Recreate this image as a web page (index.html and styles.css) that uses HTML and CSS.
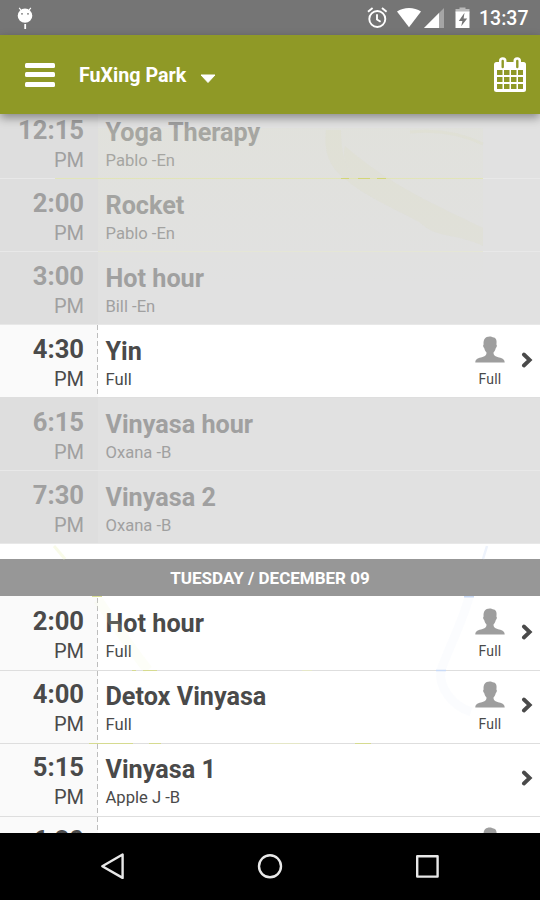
FILE: index.html
```html
<!DOCTYPE html>
<html lang="en">
<head>
    <meta charset="UTF-8">
    <meta name="viewport" content="width=device-width, initial-scale=1.0">
    <title>Class Schedule</title>
    <link rel="stylesheet" href="styles.css">
</head>
<body>
    <!-- Shared icons -->
    <svg class="sprite">
        <symbol id="person" viewBox="0 0 30 27">
            <path d="M0.3 26.5c0-3.600 3-4.500 7.200-5.600 3-.8 4.200-2 4-4.400-1.200-1.300-1.900-2.700-2.300-4.600-1-.8-1.500-2.900-.6-3.500C8.200 3.500 10 .4 14.800.4c1.400 0 2.200.3 2.900.9 3.200.2 4.500 3 3.700 7.100.9.600.4 2.700-.6 3.500-.4 1.900-1.100 3.300-2.300 4.600-.2 2.400 1 3.600 4 4.400 4.200 1.100 7.200 2 7.200 5.600z"/>
        </symbol>
        <symbol id="chevron" viewBox="0 0 12 16">
            <path d="M2.900 2.500 8.700 8l-5.800 5.500" fill="none" stroke="#4a4a4a" stroke-width="3.800" stroke-linecap="round"/>
        </symbol>
    </svg>

    <div class="status-bar">
        <svg class="droid" width="16" height="22" viewBox="0 0 16 22" fill="#fff">
            <path d="M2.200.8 4.500 4M13.800.8 11.500 4" stroke="#fff" stroke-width="1.200"/>
            <ellipse cx="8" cy="8.700" rx="7.300" ry="7.100"/>
            <path d="M7.300 17h1.800v5H7.300z"/>
            <circle cx="5" cy="6.800" r=".9" fill="#757575"/>
            <circle cx="11" cy="6.800" r=".9" fill="#757575"/>
        </svg>
        <svg class="status-icons" width="104" height="22" viewBox="0 0 104 22" fill="#fff">
            <!-- alarm -->
            <g fill="none" stroke="#fff" stroke-width="1.900">
                <circle cx="10.300" cy="12" r="8"/>
                <path d="M10 7.300v5.200l3.600 2.300M1 4.700l4.600-3.800M19.600 4.700 15 .9"/>
            </g>
            <!-- wifi -->
            <path d="M30 4.500C36.500-.3 47.500-.3 54 4.500L42 20.300z"/>
            <!-- signal -->
            <path d="M77 1v20H57z" opacity=".35"/>
            <path d="M72 6v15H57z"/>
            <!-- battery -->
            <path d="M92.500.5h6V2h4v3.500h-14V2h4z" opacity=".5"/>
            <path d="M88.500 4.500h14V21h-14z"/>
            <path d="M97.500 5.800 91.800 14h3.600l-1.200 5.200 6-7.800h-3.600z" fill="#757575"/>
        </svg>
        <span class="clock">13:37</span>
    </div>

    <header class="app-bar">
        <div class="menu"><span></span><span></span><span></span></div>
        <h1>FuXing Park</h1>
        <svg class="caret" width="16" height="10" viewBox="0 0 16 10"><path d="M1 1h14L8 8.500z" fill="#fff" stroke="#fff" stroke-linejoin="round"/></svg>
        <svg class="calendar" width="32" height="35" viewBox="0 0 32 35">
            <rect y="5" width="32" height="30" rx="2.500" fill="#fff"/>
            <rect x="5" y=".3" width="7.500" height="13" rx="3.700" fill="#fff"/>
            <rect x="19.500" y=".3" width="7.500" height="13" rx="3.700" fill="#fff"/>
            <path d="M8.700 4v6M23.300 4v6" stroke="#8f9926" stroke-width="2.400" stroke-linecap="round"/>
            <path fill="#8f9926" d="M3 13h5.500v5H3zm7 0h5.500v5H10zm7 0h5.500v5H17zm7 0h5v5h-5zM3 20h5.500v5H3zm7 0h5.500v5H10zm7 0h5.500v5H17zm7 0h5v5h-5zM3 27h5.500v5H3zm7 0h5.500v5H10zm7 0h5.500v5H17zm7 0h5v5h-5z"/>
        </svg>
    </header>

    <main class="schedule">
        <section class="day today">
            <article class="row past">
                <div class="time"><b>12:15</b><span>PM</span></div>
                <div class="info"><h2>Yoga Therapy</h2><p>Pablo -En</p></div>
            </article>
            <article class="row past">
                <div class="time"><b>2:00</b><span>PM</span></div>
                <div class="info"><h2>Rocket</h2><p>Pablo -En</p></div>
            </article>
            <article class="row past">
                <div class="time"><b>3:00</b><span>PM</span></div>
                <div class="info"><h2>Hot hour</h2><p>Bill -En</p></div>
            </article>
            <article class="row">
                <div class="time"><b>4:30</b><span>PM</span></div>
                <div class="info"><h2>Yin</h2><p>Full</p></div>
                <div class="spots"><svg><use href="#person"/></svg>Full</div>
                <svg class="chevron"><use href="#chevron"/></svg>
            </article>
            <article class="row past">
                <div class="time"><b>6:15</b><span>PM</span></div>
                <div class="info"><h2>Vinyasa hour</h2><p>Oxana -B</p></div>
            </article>
            <article class="row past">
                <div class="time"><b>7:30</b><span>PM</span></div>
                <div class="info"><h2>Vinyasa 2</h2><p>Oxana -B</p></div>
            </article>
        </section>

        <h3 class="date">TUESDAY / DECEMBER 09</h3>

        <section class="day upcoming">
            <article class="row">
                <div class="time"><b>2:00</b><span>PM</span></div>
                <div class="info"><h2>Hot hour</h2><p>Full</p></div>
                <div class="spots"><svg><use href="#person"/></svg>Full</div>
                <svg class="chevron"><use href="#chevron"/></svg>
            </article>
            <article class="row">
                <div class="time"><b>4:00</b><span>PM</span></div>
                <div class="info"><h2>Detox Vinyasa</h2><p>Full</p></div>
                <div class="spots"><svg><use href="#person"/></svg>Full</div>
                <svg class="chevron"><use href="#chevron"/></svg>
            </article>
            <article class="row">
                <div class="time"><b>5:15</b><span>PM</span></div>
                <div class="info"><h2>Vinyasa 1</h2><p>Apple J -B</p></div>
                <svg class="chevron"><use href="#chevron"/></svg>
            </article>
            <article class="row">
                <div class="time"><b>6:30</b></div>
                <div class="info"></div>
                <div class="spots"><svg><use href="#person"/></svg></div>
                <svg class="chevron"><use href="#chevron"/></svg>
            </article>
        </section>

        <!-- Faint map showing through the list -->
        <svg class="map" viewBox="0 114 540 719" fill="none">
            <defs>
                <linearGradient id="park" x1="0" y1="0" x2="0" y2="1">
                    <stop offset="0" stop-color="#dfe3b0" stop-opacity=".1"/>
                    <stop offset="1" stop-color="#dfe3b0" stop-opacity="0"/>
                </linearGradient>
            </defs>
            <path d="M98 128h385v157H98z" fill="url(#park)"/>
            <path d="M326 130q-4 32 18 48c20 18 45 28 75 44 20 18 35 10 64 24v-18c-40-20-90-40-138-82q-4 14 8 30-12-14-12-46z" fill="#d9d39b" opacity=".1"/>
            <path d="M410 132q40-4 73 12" stroke="#d9d39b" stroke-width="3" opacity=".1"/>
            <path d="M55 178.500h428" stroke="#dde29a" opacity=".6"/>
            <path d="M341 178.500h8M358 178.500h12M377 178.500h9" stroke="#d0d267" opacity=".8"/>
            <path d="M98 251.500h385" stroke="#e2e4cb" opacity=".6"/>
            <path d="M54 546l11 13" stroke="#f1f4c8" stroke-width="3" opacity=".4"/>
            <path d="M98 600c14 20 30 45 50 70" stroke="#f1f4c8" stroke-width="10" opacity=".12"/>
            <path d="M92 596.500h10M132 670.500h4M143 670.500h14M89 743.500h44M149 743.500h12M355 743.500h16" stroke="#d3d97c" opacity=".8"/>
            <path d="M302 670.500h10M270 743.500h30" stroke="#e9ecb8" opacity=".6"/>
            <path d="M487 546l-4 13" stroke="#eef3fc" stroke-width="2.500"/>
            <path d="M469 597c-6 24-20 50-28 73-3 18 12 36 30 42" stroke="#dfe8fa" stroke-width="9" opacity=".12"/>
            <path d="M464 596.700h10M436 670.500h10" stroke="#c9daf6" stroke-width="1.400"/>
        </svg>
    </main>

    <nav class="nav-bar">
        <svg width="330" height="28" viewBox="0 0 330 28" fill="none" stroke="#e8e8e8" stroke-width="2.400" stroke-linejoin="round">
            <path d="M17.600 2.500v23.400L-2.700 14.200z"/>
            <circle cx="165" cy="14.300" r="11"/>
            <rect x="312.200" y="4.200" width="20.400" height="20.400"/>
        </svg>
    </nav>
</body>
</html>
```
FILE: styles.css
```css
* {
    box-sizing: border-box;
    margin: 0;
    padding: 0;
}

body {
    width: 540px;
    height: 900px;
    display: flex;
    flex-direction: column;
    overflow: hidden;
    font-family: Roboto, sans-serif;
    color: #4a4a4a;
    background: #fff;
}

svg {
    display: block;
    flex: none;
}

.sprite {
    position: absolute;
    width: 0;
    height: 0;
}

/* Android status bar */
.status-bar {
    height: 35px;
    flex: none;
    display: flex;
    align-items: flex-start;
    padding: 7px 11px 0 17px;
    background: #757575;
    color: #fff;
}

.status-icons {
    margin-left: auto;
}

.clock {
    width: 50px;
    margin-left: 8px;
    font-size: 19.5px;
    font-weight: 500;
    line-height: 24px;
    white-space: nowrap;
}

/* Green header */
.app-bar {
    height: 79px;
    flex: none;
    display: flex;
    align-items: center;
    padding: 0 14px 0 25px;
    background: #8f9926;
    color: #fff;
    box-shadow: 0 4px 9px rgba(0, 0, 0, 0.38);
    position: relative;
    z-index: 2;
}

.menu {
    width: 30px;
    display: grid;
    gap: 4.5px;
    margin-right: 24px;
}

.menu span {
    height: 5px;
    border-radius: 1.5px;
    background: #fff;
}

.app-bar h1 {
    width: 109px;
    padding-top: 2px;
    font-size: 19.7px;
    font-weight: 700;
    line-height: 24px;
    white-space: nowrap;
}

.caret {
    margin: 9px 0 0 12px;
}

.calendar {
    margin-left: auto;
    margin-top: -1px;
}

/* Class list */
.schedule {
    flex: 1;
    min-height: 0;
    overflow: hidden;
    position: relative;
}

.today {
    margin-top: -8px;
}

.row {
    height: 73px;
    display: flex;
    border-bottom: 1px solid #dedede;
    background: #fff;
}

.time {
    width: 98px;
    padding: 9px 14px 0 0;
    text-align: right;
    background: repeating-linear-gradient(#bdbdbd 0 5px, transparent 5px 8px) right / 1px 100% no-repeat #fafafa;
}

.time b {
    display: block;
    font-size: 25.6px;
    line-height: 30px;
}

.time span {
    display: block;
    font-size: 20px;
    line-height: 24px;
    margin-top: 3px;
}

.info {
    flex: 1;
    padding: 12px 0 0 7.5px;
}

.info h2 {
    font-size: 25.2px;
    font-weight: 700;
    line-height: 30px;
}

.info p {
    font-size: 16.6px;
    line-height: 20px;
    margin-top: 3px;
}

.spots {
    width: 30px;
    padding-top: 11px;
    font-size: 14px;
    line-height: 17px;
    letter-spacing: 0.2px;
    text-align: center;
}

.spots svg {
    width: 30px;
    height: 27px;
    margin-bottom: 8px;
    fill: #9e9e9e;
}

.chevron {
    width: 12px;
    height: 16px;
    margin: 27.4px 7px 0 16px;
}

.past {
    color: #a0a0a0;
    background: #e1e1e1;
    border-color: #e8e8e8;
}

.past .time {
    background: #dedede;
}

.date {
    height: 37px;
    margin-top: 15px;
    background: #979797;
    color: #fff;
    font-size: 17px;
    font-weight: 700;
    line-height: 39px;
    text-align: center;
}

/* Upcoming rows sit a pixel higher in their cells */
.upcoming {
    padding-top: 2px;
    background: linear-gradient(90deg, #fafafa 97px, #fff 97px);
}

.upcoming .time {
    padding-top: 8px;
}

.upcoming .info {
    padding-top: 11px;
}

.upcoming .spots {
    padding-top: 10px;
}

.upcoming .chevron {
    margin-top: 26.4px;
}

.map {
    position: absolute;
    top: 0;
    left: 0;
    width: 540px;
    height: 719px;
}

/* Android navigation buttons */
.nav-bar {
    height: 67px;
    flex: none;
    display: flex;
    justify-content: center;
    padding-top: 19px;
    background: #000;
}

.nav-bar svg {
    overflow: visible;
}
```
